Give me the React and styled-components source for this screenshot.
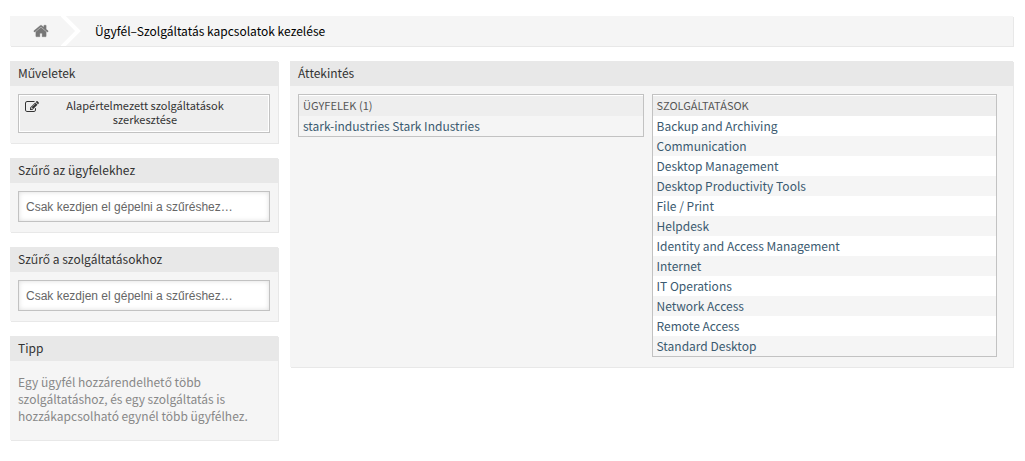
import React from 'react'
import styled, { createGlobalStyle } from 'styled-components';

const services = [
    'Backup and Archiving',
    'Communication',
    'Desktop Management',
    'Desktop Productivity Tools',
    'File / Print',
    'Helpdesk',
    'Identity and Access Management',
    'Internet',
    'IT Operations',
    'Network Access',
    'Remote Access',
    'Standard Desktop',
];

const customers = ['stark-industries Stark Industries'];

function HomeIcon() {
    return (
        <svg width="16" height="16" viewBox="0 0 1792 1792" fill="currentColor" stroke="currentColor" strokeWidth="40" aria-hidden="true">
            <path d="M1472 992v480q0 26-19 45t-45 19h-384v-384h-256v384h-384q-26 0-45-19t-19-45v-480q0-1 .5-3t.5-3l575-474 575 474q1 2 1 6zm223-69l-62 74q-8 9-21 11h-3q-13 0-21-7l-692-577-692 577q-12 8-24 7-13-2-21-11l-62-74q-8-10-7-23.5t11-21.5l719-599q32-26 76-26t76 26l244 204v-195q0-14 9-23t23-9h192q14 0 23 9t9 23v408l219 182q10 8 11 21.5t-7 23.5z" />
        </svg>
    )
}

function EditIcon() {
    return (
        <svg width="14" height="14" viewBox="0 0 1792 1792" fill="currentColor" aria-hidden="true">
            <path d="M888 1184l116-116-152-152-116 116v56h96v96h56zm440-720q-16-16-33 1l-350 350q-17 17-1 33t33-1l350-350q17-17 1-33zm80 594v190q0 119-84.5 203.5t-203.5 84.5h-832q-119 0-203.5-84.5t-84.5-203.5v-832q0-119 84.5-203.5t203.5-84.5h832q63 0 117 25 15 7 18 23 3 17-9 29l-49 49q-14 14-32 8-23-6-45-6h-832q-66 0-113 47t-47 113v832q0 66 47 113t113 47h832q66 0 113-47t47-113v-126q0-13 9-22l64-64q15-15 35-7t20 29zm-96-738l288 288-672 672h-288v-288zm444 132l-92 92-288-288 92-92q28-28 68-28t68 28l152 152q28 28 28 68t-28 68z" />
        </svg>
    )
}

function Chevron() {
    return (
        <svg width="20" height="30" viewBox="0 0 20 30" fill="none" stroke="#fff" strokeWidth="4" aria-hidden="true">
            <path d="M1 -1L17 15L1 31" />
        </svg>
    )
}

function FilterWidget({ id, title }) {
    return (
        <Widget>
            <WidgetTitle><label htmlFor={id}>{title}</label></WidgetTitle>
            <WidgetBody>
                <FilterInput id={id} type="text" placeholder="Csak kezdjen el gépelni a szűréshez…" />
            </WidgetBody>
        </Widget>
    )
}

function ListTable({ title, items }) {
    return (
        <Table>
            <thead>
                <tr><th>{title}</th></tr>
            </thead>
            <tbody>
                {items.map((item) => (
                    <tr key={item}><td><a href="#edit">{item}</a></td></tr>
                ))}
            </tbody>
        </Table>
    )
}

function App() {
    return (
        <Page>
            <GlobalStyle />
            <Breadcrumb>
                <HomeLink href="#home" aria-label="Home"><HomeIcon /></HomeLink>
                <Chevron />
                <Current>Ügyfél–Szolgáltatás kapcsolatok kezelése</Current>
            </Breadcrumb>
            <Columns>
                <Sidebar>
                    <Widget>
                        <WidgetTitle>Műveletek</WidgetTitle>
                        <WidgetBody>
                            <ActionButton type="button">
                                <EditIcon />
                                <span>Alapértelmezett szolgáltatások szerkesztése</span>
                            </ActionButton>
                        </WidgetBody>
                    </Widget>
                    <FilterWidget id="filter-customers" title="Szűrő az ügyfelekhez" />
                    <FilterWidget id="filter-services" title="Szűrő a szolgáltatásokhoz" />
                    <Widget>
                        <WidgetTitle>Tipp</WidgetTitle>
                        <WidgetBody>
                            <Hint>
                                Egy ügyfél hozzárendelhető több szolgáltatáshoz, és egy szolgáltatás is hozzákapcsolható egynél több ügyfélhez.
                            </Hint>
                        </WidgetBody>
                    </Widget>
                </Sidebar>
                <Widget as="main">
                    <WidgetTitle>Áttekintés</WidgetTitle>
                    <Lists>
                        <ListTable title="Ügyfelek (1)" items={customers} />
                        <ListTable title="Szolgáltatások" items={services} />
                    </Lists>
                </Widget>
            </Columns>
        </Page>
    )
}

export default App

const GlobalStyle = createGlobalStyle`
    * {
        box-sizing: border-box;
    }
    body {
        margin: 0;
        background: #fff;
        color: #333;
        // the latin glyphs of this family are the Source Sans ones
        font-family: "Noto Sans CJK SC", "Open Sans", sans-serif;
        font-size: 12px;
        line-height: 17px;
    }
`

const Page = styled.div`
    padding: 16px 12px 16px 10px;
`

const Breadcrumb = styled.nav`
    display: flex;
    align-items: center;
    height: 30px;
    margin-bottom: 15px;
    background: #f5f5f5;
    box-shadow: 1px 1px 0 #e8e8e8;
`

const HomeLink = styled.a`
    display: flex;
    padding: 0 12px 0 23px;
    color: #777;
`

const Current = styled.span`
    padding: 0 0 2px 14px;
    color: #000;
`

const Columns = styled.div`
    display: grid;
    grid-template-columns: 268px 1fr;
    gap: 12px;
    align-items: start;
`

const Sidebar = styled.aside`
    display: flex;
    flex-direction: column;
    gap: 15px;
`

const Widget = styled.section`
    background: #f5f5f5;
    box-shadow: 1px 1px 0 #e8e8e8;
`

const WidgetTitle = styled.h2`
    margin: 0;
    padding: 3px 8px 5px;
    background: #e8e8e8;
    font-size: 12px;
    font-weight: normal;
    line-height: 17px;
`

const WidgetBody = styled.div`
    padding: 8px 8px 10px;
`

const ActionButton = styled.button`
    display: flex;
    align-items: flex-start;
    width: 100%;
    padding: 3px 6px 6px;
    border: 1px solid #c2c2c2;
    border-radius: 0;
    background: #eee;
    box-shadow: inset 0 0 0 1px #fff;
    color: #333;
    font-family: inherit;
    font-size: 11px;
    line-height: 14px;
    cursor: pointer;
    svg {
        margin-top: 2px;
    }
    span {
        flex: 1;
        padding: 0 24px 0 12px;
        text-align: center;
    }
`

const FilterInput = styled.input`
    display: block;
    width: 100%;
    height: 31px;
    padding: 0 7px;
    border: 1px solid #c2c2c2;
    border-radius: 0;
    background: #fff;
    box-shadow: inset 0 0 5px #ddd;
    font-family: "Liberation Sans", Arial, sans-serif;
    font-size: 12px;
    &::placeholder {
        color: #666;
        opacity: 1;
    }
`

const Hint = styled.p`
    margin: 4px 0 6px;
    color: #888;
`

const Lists = styled.div`
    display: grid;
    grid-template-columns: 1fr 1fr;
    gap: 8px;
    align-items: start;
    padding: 8px 16px 10px 8px;
`

const Table = styled.table`
    width: 100%;
    border: 1px solid #c2c2c2;
    border-spacing: 0;
    th {
        height: 21px;
        padding: 0 4px;
        background: #eee;
        box-shadow: inset 0 1px 0 #fff;
        color: #555;
        font-size: 11px;
        font-weight: normal;
        text-align: left;
        text-transform: uppercase;
    }
    td {
        height: 20px;
        padding: 0 4px 2px;
        background: #fff;
    }
    tr:nth-child(even) td,
    tr:only-child td {
        background: #f5f5f5;
    }
    a {
        color: #3b5a70;
        text-decoration: none;
    }
`
